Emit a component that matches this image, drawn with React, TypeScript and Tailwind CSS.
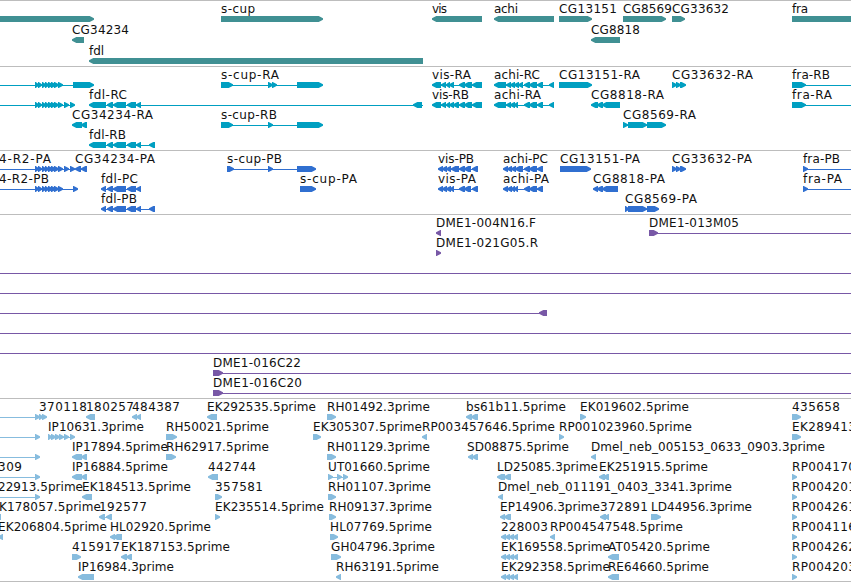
import React from 'react';

type Span = [number, number];

type Feature = {
  label?: string;
  // label start and end, in px
  at?: Span;
  dir?: 'fwd' | 'rev';
  exons?: Span[];
  line?: Span;
};

type Track = {
  name: string;
  color: string;
  rowClass: string;
  padClass: string;
  rows: Feature[][];
};

const WIDTH = 851;
const TIP = 5;

const fwd = (label: string, at: Span, exons: Span[], line?: Span): Feature => ({ label, at, dir: 'fwd', exons, line });
const rev = (label: string, at: Span, exons: Span[], line?: Span): Feature => ({ label, at, dir: 'rev', exons, line });

const cluster: Span[] = [[35, 39], [38, 42], [42, 46], [45, 49], [48, 53], [51, 56], [54, 59], [58, 63]];
const clusterLong: Span[] = [...cluster, [64, 69], [70, 75]];
const fdlExons: Span[] = [[107, 113], [113, 126], [127, 136], [136, 141]];
const achiTail: Span[] = [[524, 530], [529, 537], [537, 543]];
const visTail: Span[] = [[459, 465], [464, 472], [472, 482]];
const cg33632: Span[] = [[672, 677], [676, 681], [680, 686]];
const est501: Span[] = [[501, 506], [505, 510], [509, 514], [513, 518]];

const tracks: Track[] = [
  {
    name: 'genes',
    color: '#409093',
    rowClass: 'h-[21px]',
    padClass: 'pb-[2px]',
    rows: [
      [
        fwd('', [0, 0], [[-10, 94]]),
        fwd('s-cup', [221, 255], [[221, 323]]),
        rev('vis', [432, 447], [[432, 482]]),
        rev('achi', [494, 518], [[494, 554]]),
        fwd('CG13151', [559, 617], [[559, 592]]),
        fwd('CG8569', [623, 672], [[623, 666]]),
        fwd('CG33632', [672, 729], [[672, 685]]),
        fwd('fra', [792, 808], [[792, 870]]),
      ],
      [
        rev('CG34234', [72, 129], [[72, 84]]),
        rev('CG8818', [591, 640], [[591, 620]]),
      ],
      [rev('fdl', [89, 104], [[89, 423]])],
    ],
  },
  {
    name: 'transcripts',
    color: '#009fc1',
    rowClass: 'h-5',
    padClass: 'pb-[3px]',
    rows: [
      [
        fwd('', [0, 0], [...cluster, [73, 94]], [-5, 90]),
        fwd('s-cup-RA', [221, 279], [[221, 233], [268, 273], [272, 277], [297, 323]], [221, 320]),
        rev('vis-RA', [432, 471], [[432, 441], [441, 446], [446, 450], [449, 454], ...visTail], [436, 482]),
        rev('achi-RC', [494, 540], [[494, 506], [506, 511], [510, 515], [514, 519], [518, 523], ...achiTail, [549, 554]], [498, 554]),
        fwd('CG13151-RA', [559, 640], [[559, 592]]),
        fwd('CG33632-RA', [672, 753], cg33632),
        fwd('fra-RB', [792, 830], [[792, 806]], [792, 860]),
      ],
      [
        fwd('', [0, 0], clusterLong, [-5, 73]),
        rev('fdl-RC', [89, 127], [[89, 106], ...fdlExons, [413, 422]], [93, 423]),
        rev('vis-RB', [432, 469], [[432, 441], [441, 446], [446, 450], [449, 454], [453, 459], ...visTail], [436, 482]),
        rev('achi-RA', [494, 541], [[494, 506], [506, 511], [510, 515], [514, 518], ...achiTail, [549, 554]], [498, 554]),
        rev('CG8818-RA', [591, 664], [[591, 598], [597, 603], [602, 620]], [595, 620]),
        fwd('fra-RA', [792, 832], [[792, 806]], [792, 860]),
      ],
      [
        rev('CG34234-RA', [72, 153], [[72, 82], [81, 87]]),
        fwd('s-cup-RB', [221, 277], [[221, 233], [268, 273], [297, 323]], [221, 320]),
        fwd('CG8569-RA', [623, 696], [[623, 628], [628, 647], [647, 666]], [623, 664]),
      ],
      [rev('fdl-RB', [89, 126], [[89, 106], ...fdlExons, [149, 155]], [93, 155])],
    ],
  },
  {
    name: 'proteins',
    color: '#306fd0',
    rowClass: 'h-5',
    padClass: 'pb-[3px]',
    rows: [
      [
        fwd('4-R2-PA', [-1, 51], clusterLong, [-5, 75]),
        rev('CG34234-PA', [75, 155], [[75, 81], [81, 87]], [76, 87]),
        fwd('s-cup-PB', [227, 282], [[227, 234], [268, 273], [297, 316]], [227, 314]),
        rev('vis-PB', [438, 474], [[438, 443], [442, 447], [446, 451], [451, 459], [459, 465], [464, 471], [472, 478]], [440, 478]),
        rev('achi-PC', [503, 548], [[503, 508], [507, 512], [511, 516], [515, 523], ...achiTail], [506, 543]),
        fwd('CG13151-PA', [560, 640], [[560, 591]]),
        fwd('CG33632-PA', [672, 752], cg33632),
        fwd('fra-PB', [803, 840], [[803, 808]], [803, 860]),
      ],
      [
        fwd('4-R2-PB', [-1, 49], [...cluster, [73, 78]], [-5, 76]),
        rev('fdl-PC', [101, 138], [[101, 106], ...fdlExons], [103, 141]),
        fwd('s-cup-PA', [300, 357], [[300, 316]]),
        rev('vis-PA', [438, 476], [[438, 443], [442, 447], [446, 451], [450, 454], [459, 465], [464, 471], [472, 478]], [440, 478]),
        rev('achi-PA', [503, 549], [[503, 508], [507, 512], [511, 515], [514, 518], ...achiTail], [506, 543]),
        rev('CG8818-PA', [593, 665], [[593, 598], [597, 603], [602, 618]], [595, 618]),
        fwd('fra-PA', [803, 842], [[803, 808]], [803, 860]),
      ],
      [
        rev('fdl-PB', [101, 137], [[101, 106], ...fdlExons, [149, 155]], [103, 155]),
        fwd('CG8569-PA', [625, 697], [[625, 629], [628, 647], [647, 659]], [625, 657]),
      ],
    ],
  },
  {
    name: 'clones',
    color: '#7858a6',
    rowClass: 'h-5',
    padClass: 'pb-[3px]',
    rows: [
      [
        rev('DME1-004N16.F', [436, 536], [[436, 441]]),
        fwd('DME1-013M05', [649, 739], [[649, 658]], [649, 860]),
      ],
      [fwd('DME1-021G05.R', [436, 538], [[436, 441]])],
      [{ line: [-5, 860] }],
      [{ line: [-5, 860] }],
      [{ dir: 'rev', exons: [[539, 547]], line: [-5, 546] }],
      [{ line: [-5, 860] }],
      [{ line: [-5, 860] }],
      [fwd('DME1-016C22', [213, 301], [[213, 223]], [213, 860])],
      [fwd('DME1-016C20', [213, 302], [[213, 223]], [213, 860])],
    ],
  },
  {
    name: 'ests',
    color: '#87bcde',
    rowClass: 'h-5',
    padClass: 'pb-[2px]',
    rows: [
      [
        fwd('370118', [39, 87], [[35, 40], [39, 43], [42, 47]], [-5, 45]),
        rev('180257', [86, 134], [[86, 95]]),
        rev('484387', [132, 180], [[132, 137], [136, 141]]),
        rev('EK292535.5prime', [207, 316], [[207, 217]]),
        fwd('RH01492.3prime', [327, 430], [[327, 336]]),
        rev('bs61b11.5prime', [466, 566], [[466, 472], [471, 478]]),
        fwd('EK019602.5prime', [580, 689], [[580, 586]]),
        fwd('435658', [792, 840], [[792, 801]]),
      ],
      [
        fwd('IP10631.3prime', [48, 144], [[48, 52], [51, 56], [55, 60], [59, 64], [64, 69], [70, 75]], [48, 73]),
        fwd('', [0, 0], [[35, 40]], [-5, 38]),
        fwd('RH50021.5prime', [166, 269], [[166, 177]]),
        fwd('EK305307.5prime', [313, 422], [[313, 321]]),
        rev('RP003457646.5prime', [422, 555], [[422, 427]]),
        fwd('RP001023960.5prime', [559, 692], [[559, 564]]),
        fwd('EK289413', [792, 856], [[792, 801]]),
      ],
      [
        fwd('', [0, 0], [[35, 40]], [-5, 38]),
        rev('IP17894.5prime', [72, 168], [[72, 82], [81, 87]]),
        fwd('RH62917.5prime', [166, 269], [[166, 176]]),
        fwd('RH01129.3prime', [327, 430], [[327, 336]]),
        rev('SD08875.5prime', [467, 569], [[468, 473], [472, 478]]),
        rev('Dmel_neb_005153_0633_0903.3prime', [591, 825], [[591, 596]]),
      ],
      [
        fwd('309', [-2, 22], [[35, 40]], [-5, 38]),
        rev('IP16884.5prime', [72, 168], [[72, 82], [81, 87]]),
        rev('442744', [208, 256], [[208, 218]]),
        fwd('UT01660.5prime', [328, 430], [[328, 333], [337, 342], [343, 348]], [328, 346]),
        rev('LD25085.3prime', [497, 598], [[497, 505], [504, 511]]),
        rev('EK251915.5prime', [599, 708], [[599, 605], [603, 609]]),
        fwd('RP004170', [792, 856], [[792, 797]]),
      ],
      [
        fwd('22913.5prime', [-2, 83], [[35, 40]], [-5, 38]),
        rev('EK184513.5prime', [82, 191], [[82, 92]]),
        fwd('357581', [215, 263], [[215, 222]]),
        fwd('RH01107.3prime', [328, 431], [[328, 336]]),
        rev('Dmel_neb_011191_0403_3341.3prime', [498, 732], [[498, 503]]),
        fwd('RP004201', [792, 856], [[792, 797]]),
      ],
      [
        rev('K178057.5prime', [-1, 101], [[-5, 1]]),
        rev('192577', [99, 147], [[99, 105], [106, 112]], [101, 112]),
        fwd('EK235514.5prime', [215, 324], [[215, 220]]),
        fwd('RH09137.3prime', [329, 432], [[329, 336]]),
        rev('EP14906.3prime', [500, 600], [[500, 505], [504, 511]]),
        rev('372891', [600, 648], [[600, 606], [604, 609]]),
        fwd('LD44956.3prime', [651, 752], [[651, 661]]),
        fwd('RP004261', [792, 856], [[792, 797]]),
      ],
      [
        rev('EK206804.5prime', [-2, 107], [[-2, 3]]),
        rev('HL02920.5prime', [110, 211], [[110, 115], [113, 122]]),
        fwd('HL07769.5prime', [330, 432], [[330, 338]]),
        rev('228003', [501, 548], est501),
        rev('RP004547548.5prime', [550, 683], [[550, 555]]),
        fwd('RP004116', [792, 856], [[792, 797]]),
      ],
      [
        fwd('415917', [72, 120], [[72, 81]]),
        rev('EK187153.5prime', [121, 230], [[121, 127], [126, 132]]),
        fwd('GH04796.3prime', [331, 435], [[331, 341]]),
        rev('EK169558.5prime', [501, 610], est501),
        rev('AT05420.5prime', [608, 710], [[608, 619]]),
        fwd('RP004262', [792, 856], [[792, 797]]),
      ],
      [
        rev('IP16984.3prime', [78, 174], [[78, 94]]),
        rev('RH63191.5prime', [336, 439], [[336, 341]]),
        rev('EK292358.5prime', [501, 610], est501),
        rev('RE64660.5prime', [608, 709], [[608, 619]]),
        fwd('RP004203', [792, 856], [[792, 797]]),
      ],
    ],
  },
];

// Block with a blunt pointed end, 6px tall
const exonPoints = ([x1, x2]: Span, dir?: 'fwd' | 'rev') => {
  const tip = Math.min(TIP, x2 - x1) - 0.7;
  return dir === 'rev'
    ? `${x2},15 ${x1 + tip},15 ${x1},17.3 ${x1},18.7 ${x1 + tip},21 ${x2},21`
    : `${x1},15 ${x2 - tip},15 ${x2},17.3 ${x2},18.7 ${x2 - tip},21 ${x1},21`;
};

const FeatureGlyph = ({ feature, color }: { feature: Feature; color: string }) => {
  const { label, at, dir, exons = [], line } = feature;
  return (
    <g>
      {line && <rect x={line[0]} y={18} width={line[1] - line[0]} height={1} fill={color} />}
      {exons.map((exon, index) => (
        <polygon key={index} points={exonPoints(exon, dir)} fill={color} />
      ))}
      {label && at && (
        <text x={at[0]} y={12} textLength={at[1] - at[0]} fill="#111">
          {label}
        </text>
      )}
    </g>
  );
};

const TrackPanel = ({ track }: { track: Track }) => (
  <section className={`border-t border-[#bdbdbd] ${track.padClass}`}>
    {track.rows.map((row, index) => (
      <div key={index} className={`${track.rowClass} w-full`}>
        <svg width={WIDTH} height={21} className="block overflow-hidden">
          {row.map((feature, i) => (
            <FeatureGlyph key={i} feature={feature} color={track.color} />
          ))}
        </svg>
      </div>
    ))}
  </section>
);

const App = () => {
  return (
    <main className="w-[851px] h-[582px] overflow-hidden bg-white border-b border-[#bdbdbd] font-['DejaVu_Sans',sans-serif] text-[12px]">
      {tracks.map((track) => (
        <TrackPanel key={track.name} track={track} />
      ))}
    </main>
  );
};

export default App;
